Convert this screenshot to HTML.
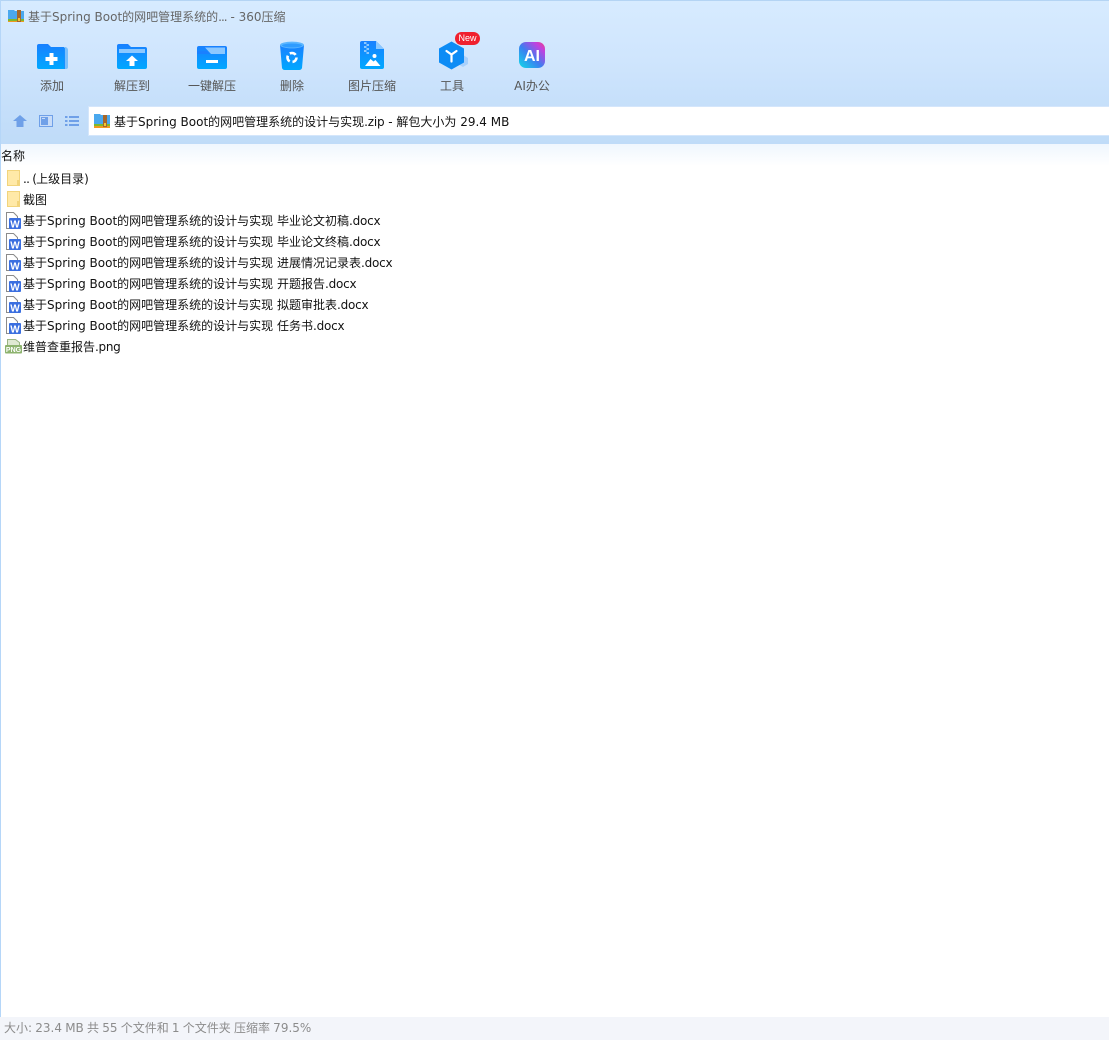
<!DOCTYPE html>
<html lang="zh-CN">
<head>
<meta charset="utf-8">
<title>360压缩</title>
<style>
html,body{margin:0;padding:0;background:#fff}
body{width:1109px;height:1040px;position:relative;overflow:hidden;font-family:"DejaVu Sans","Noto Sans CJK SC",sans-serif;font-size:12px;color:#111}
.abs{position:absolute}
.top{left:0;top:0;width:1109px;height:144px;background:linear-gradient(#d7ebff 0,#cfe5fd 60px,#c5dffa 107px,#bfdbf8 144px);border-top:1px solid #b4d4f4;box-sizing:border-box}
.t{position:absolute;white-space:pre;line-height:16px}
.tool{position:absolute;top:78px;width:80px;text-align:center;color:#555;line-height:16px;white-space:pre}
.row{position:absolute;left:23px;line-height:16px;white-space:pre;color:#111}
.n{letter-spacing:-.2px}
svg{position:absolute;overflow:visible}
</style>
</head>
<body>
<div class="abs top"></div>
<div class="abs" style="left:0;top:144px;width:1109px;height:22px;background:linear-gradient(#eff6fe,#fff)"></div>
<div class="abs" style="left:0;top:0;width:1px;height:1017px;background:#b5d6f8"></div>

<svg style="left:8px;top:9px" width="16" height="15" viewBox="0 0 16 15"><path d="M0 1h6l1 1h9v10H0z" fill="#4aa8ee"/><path d="M0 10h16v3H0z" fill="#7db92e"/><path d="M0 12h16v1H0z" fill="#f09a20"/><rect x="9" y="1" width="4" height="12" fill="#a5672a"/><rect x="10" y="9" width="2" height="3" fill="#f4c430"/></svg>
<div class="t" style="left:28px;top:9px;color:#666">基于Spring Boot的网吧管理系统的<span style="letter-spacing:-1px">...</span> - 360压缩</div>

<!-- add -->
<svg style="left:37px;top:44px" width="31" height="25" viewBox="0 0 31 25"><defs><linearGradient id="g" x1="0" y1="0" x2="0" y2="1"><stop offset="0" stop-color="#1a80ff"/><stop offset="1" stop-color="#00a8ff"/></linearGradient></defs><path d="M2 0h9l3 3h13a3 3 0 0 1 3 3v17a2 2 0 0 1-2 2H2a2 2 0 0 1-2-2V2a2 2 0 0 1 2-2z" fill="url(#g)"/><path d="M27 3h1a3 3 0 0 1 3 3v17a2 2 0 0 1-2 2h-2z" fill="#7cc0fb"/><path d="M27 4h1v21h-1z" fill="#1a90ff"/><path d="M12.500 9h4v4h4v4h-4v4h-4v-4h-4v-4h4z" fill="#fff"/></svg>
<div class="tool" style="left:12px">添加</div>

<!-- extract to -->
<svg style="left:117px;top:44px" width="30" height="25" viewBox="0 0 30 25"><path d="M2 0h9l3 3h14a2 2 0 0 1 2 2v18a2 2 0 0 1-2 2H2a2 2 0 0 1-2-2V2a2 2 0 0 1 2-2z" fill="url(#g)"/><path d="M2 5h26v4H2z" fill="#8cc8ff"/><path d="M15 11.500l6 5.500h-3.500v5h-5v-5H9z" fill="#fff"/></svg>
<div class="tool" style="left:92px">解压到</div>

<!-- one key -->
<svg style="left:197px;top:46px" width="30" height="23" viewBox="0 0 30 23"><rect width="30" height="23" rx="2" fill="url(#g)"/><path d="M8 1.500h20V8H14z" fill="#8cc8ff"/><path d="M0 5h10l3 3H0z" fill="#1a80ff"/><rect x="9" y="14" width="12" height="3" fill="#fff"/></svg>
<div class="tool" style="left:172px">一键解压</div>

<!-- delete -->
<svg style="left:280px;top:41px" width="24" height="30" viewBox="0 0 24 30"><path d="M0 4h24l-2 23a3 3 0 0 1-3 2H5a3 3 0 0 1-3-2z" fill="url(#g)"/><ellipse cx="12" cy="4" rx="12" ry="3.400" fill="#5cb6ff"/><ellipse cx="12" cy="4.500" rx="10" ry="2" fill="#2f9cff"/><circle cx="12" cy="16.500" r="4.500" fill="none" stroke="#fff" stroke-width="2.600" stroke-dasharray="6.500 2.900"/></svg>
<div class="tool" style="left:252px">删除</div>

<!-- image compress -->
<svg style="left:360px;top:41px" width="24" height="28" viewBox="0 0 24 28"><path d="M2 0h14l8 8v18a2 2 0 0 1-2 2H2a2 2 0 0 1-2-2V2a2 2 0 0 1 2-2z" fill="url(#g)"/><path d="M16 0l8 8h-8z" fill="#8cc8ff"/><path d="M4 1h2.500v2H4zM6.500 3H9v2H6.500zM4 5h2.500v2H4zM6.500 7H9v2H6.500zM4 9h2.500v2H4zM6.500 11H9v2H6.500z" fill="#8cc8ff"/><path d="M5 25l5.500-7 3 2.500 2-1.500 5 6z" fill="#fff"/><circle cx="14.500" cy="15" r="2" fill="#fff"/></svg>
<div class="tool" style="left:332px">图片压缩</div>

<!-- tools -->
<svg style="left:439px;top:41px" width="30" height="29" viewBox="0 0 30 29"><path d="M24 14l5 3v6l-5 3-5-3v-6z" fill="#a8d0fb"/><path d="M12.500 0.500l12.500 7v14l-12.500 7-12.500-7v-14z" fill="#0d8cf5"/><path d="M7.500 10l5 3.500 5-3.500M12.500 13.500v7" fill="none" stroke="#fff" stroke-width="2.200" stroke-linecap="round"/></svg>
<div class="abs" style="left:455px;top:32px;width:25px;height:13px;border-radius:7px;background:#f0202e;color:#fff;font-size:9px;line-height:13px;text-align:center;font-family:'Liberation Sans'">New</div>
<div class="tool" style="left:412px">工具</div>

<!-- AI -->
<svg style="left:519px;top:42px" width="26" height="26" viewBox="0 0 26 26"><defs><linearGradient id="ai" x1="0" y1="1" x2="1" y2="0"><stop offset="0" stop-color="#10dce8"/><stop offset=".45" stop-color="#3a80f0"/><stop offset=".8" stop-color="#c040e0"/><stop offset="1" stop-color="#f04080"/></linearGradient></defs><rect width="26" height="26" rx="7" fill="url(#ai)"/><text x="13" y="19" text-anchor="middle" font-family="Liberation Sans" font-weight="700" font-size="16" fill="#fff">AI</text></svg>
<div class="tool" style="left:492px">AI办公</div>

<!-- nav -->
<svg style="left:13px;top:115px" width="14" height="12" viewBox="0 0 14 12"><path d="M7 0l7 6h-3.500v6h-7V6H0z" fill="#6fa0e8"/></svg>
<svg style="left:39px;top:115px" width="14" height="12" viewBox="0 0 14 12"><rect x=".5" y=".5" width="13" height="11" fill="#c8dcf8" stroke="#6fa0e8"/><rect x="2" y="2" width="7" height="8" fill="#6fa0e8"/><rect x="3" y="3" width="3" height="1" fill="#c8dcf8"/></svg>
<svg style="left:65px;top:115px" width="14" height="12" viewBox="0 0 14 12"><path d="M0 1h2.500v2H0zM0 5h2.500v2H0zM0 9h2.500v2H0zM4 1h10v2H4zM4 5h10v2H4zM4 9h10v2H4z" fill="#6fa0e8"/></svg>

<div class="abs" style="left:89px;top:107px;width:1020px;height:28px;background:#fff;box-shadow:0 0 0 1px #d4e6fb"></div>
<svg style="left:94px;top:114px" width="16" height="15" viewBox="0 0 16 15"><path d="M0 0h6l1 1h9v10H0z" fill="#4aa8ee"/><path d="M0 10h16v3H0z" fill="#7db92e"/><path d="M0 12h16v2H0z" fill="#f09a20"/><rect x="9" y="1" width="4" height="12" fill="#a5672a"/><rect x="10" y="9" width="2" height="3" fill="#f4c430"/></svg>
<div class="t" style="left:114px;top:114px;color:#111;font-size:12px">基于Spring Boot的网吧管理系统的设计与实现<span class="n">.zip</span> - 解包大小为 29.4 MB</div>

<div class="t" style="left:1px;top:148px;color:#111">名称</div>

<!-- folders -->
<svg style="left:7px;top:170px" width="13" height="16" viewBox="0 0 13 16"><rect x=".5" y=".5" width="12" height="15" fill="#ffe9a8" stroke="#f2d47c"/><path d="M10 10h3v6h-3z" fill="#f2d47c"/></svg>
<div class="row" style="top:171px"><span style="letter-spacing:-.75px">.. (</span>上级目录)</div>
<svg style="left:7px;top:191px" width="13" height="16" viewBox="0 0 13 16"><rect x=".5" y=".5" width="12" height="15" fill="#ffe9a8" stroke="#f2d47c"/><path d="M10 10h3v6h-3z" fill="#f2d47c"/></svg>
<div class="row" style="top:192px">截图</div>

<!-- docs -->
<svg style="left:6px;top:212px" width="15" height="18" viewBox="0 0 15 18"><path d="M.5.500h7l4 4v12h-11z" fill="#fff" stroke="#8b8b8b"/><rect x="3" y="6" width="12" height="11" rx="1" fill="#3b6fe0"/><text x="9" y="15.500" text-anchor="middle" font-family="Liberation Sans" font-weight="700" font-size="10" fill="#fff">W</text></svg>
<div class="row" style="top:213px">基于Spring Boot的网吧管理系统的设计与实现 毕业论文初稿<span class="n">.docx</span></div>
<svg style="left:6px;top:233px" width="15" height="18" viewBox="0 0 15 18"><path d="M.5.500h7l4 4v12h-11z" fill="#fff" stroke="#8b8b8b"/><rect x="3" y="6" width="12" height="11" rx="1" fill="#3b6fe0"/><text x="9" y="15.500" text-anchor="middle" font-family="Liberation Sans" font-weight="700" font-size="10" fill="#fff">W</text></svg>
<div class="row" style="top:234px">基于Spring Boot的网吧管理系统的设计与实现 毕业论文终稿<span class="n">.docx</span></div>
<svg style="left:6px;top:254px" width="15" height="18" viewBox="0 0 15 18"><path d="M.5.500h7l4 4v12h-11z" fill="#fff" stroke="#8b8b8b"/><rect x="3" y="6" width="12" height="11" rx="1" fill="#3b6fe0"/><text x="9" y="15.500" text-anchor="middle" font-family="Liberation Sans" font-weight="700" font-size="10" fill="#fff">W</text></svg>
<div class="row" style="top:255px">基于Spring Boot的网吧管理系统的设计与实现 进展情况记录表<span class="n">.docx</span></div>
<svg style="left:6px;top:275px" width="15" height="18" viewBox="0 0 15 18"><path d="M.5.500h7l4 4v12h-11z" fill="#fff" stroke="#8b8b8b"/><rect x="3" y="6" width="12" height="11" rx="1" fill="#3b6fe0"/><text x="9" y="15.500" text-anchor="middle" font-family="Liberation Sans" font-weight="700" font-size="10" fill="#fff">W</text></svg>
<div class="row" style="top:276px">基于Spring Boot的网吧管理系统的设计与实现 开题报告<span class="n">.docx</span></div>
<svg style="left:6px;top:296px" width="15" height="18" viewBox="0 0 15 18"><path d="M.5.500h7l4 4v12h-11z" fill="#fff" stroke="#8b8b8b"/><rect x="3" y="6" width="12" height="11" rx="1" fill="#3b6fe0"/><text x="9" y="15.500" text-anchor="middle" font-family="Liberation Sans" font-weight="700" font-size="10" fill="#fff">W</text></svg>
<div class="row" style="top:297px">基于Spring Boot的网吧管理系统的设计与实现 拟题审批表<span class="n">.docx</span></div>
<svg style="left:6px;top:317px" width="15" height="18" viewBox="0 0 15 18"><path d="M.5.500h7l4 4v12h-11z" fill="#fff" stroke="#8b8b8b"/><rect x="3" y="6" width="12" height="11" rx="1" fill="#3b6fe0"/><text x="9" y="15.500" text-anchor="middle" font-family="Liberation Sans" font-weight="700" font-size="10" fill="#fff">W</text></svg>
<div class="row" style="top:318px">基于Spring Boot的网吧管理系统的设计与实现 任务书<span class="n">.docx</span></div>

<!-- png -->
<svg style="left:5px;top:339px" width="17" height="15" viewBox="0 0 17 15"><path d="M2.500.500h8l4 3v10h-12z" fill="#dfe9d2" stroke="#9ab584"/><rect x="0" y="6" width="17" height="8.500" rx="1" fill="#8db36e"/><text x="8.500" y="13" text-anchor="middle" font-family="Liberation Sans" font-weight="700" font-size="7" fill="#fff">PNG</text></svg>
<div class="row" style="top:339px">维普查重报告<span style="letter-spacing:-.3px">.png</span></div>

<!-- status -->
<div class="abs" style="left:0;top:1017px;width:1109px;height:23px;background:#f3f5fa"></div>
<div class="t" style="left:4px;top:1020px;color:#8c8c8c;word-spacing:-.6px">大小: 23.4 MB 共 55 个文件和 1 个文件夹 压缩率 79.5%</div>
</body>
</html>
